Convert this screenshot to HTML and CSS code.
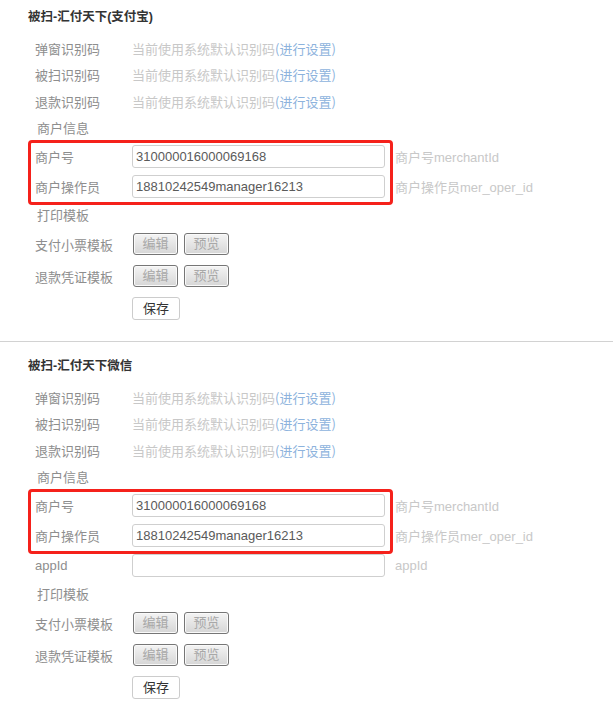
FILE: index.html
```html
<!DOCTYPE html>
<html lang="zh-CN">
<head>
<meta charset="utf-8">
<title>被扫-汇付天下</title>
<link rel="stylesheet" href="styles.css">
</head>
<body>
<div class="section">
  <div class="title">被扫-汇付天下(支付宝)</div>
  <div class="row r-code"><span class="label">弹窗识别码</span><span class="value">当前使用系统默认识别码<a class="link">(进行设置)</a></span></div>
  <div class="row r-code"><span class="label">被扫识别码</span><span class="value">当前使用系统默认识别码<a class="link">(进行设置)</a></span></div>
  <div class="row r-code"><span class="label">退款识别码</span><span class="value">当前使用系统默认识别码<a class="link">(进行设置)</a></span></div>
  <div class="row r-code"><span class="label sub">商户信息</span></div>
  <div class="merchant">
    <div class="row r-field"><span class="label">商户号</span><input class="field" type="text" value="310000016000069168"><span class="hint">商户号merchantId</span></div>
    <div class="row r-field"><span class="label">商户操作员</span><input class="field" type="text" value="18810242549manager16213"><span class="hint">商户操作员mer_oper_id</span></div>
  </div>
  <div class="row r-head"><span class="label sub">打印模板</span></div>
  <div class="row r-tpl"><span class="label">支付小票模板</span><button class="btn">编辑</button><button class="btn">预览</button></div>
  <div class="row r-tpl"><span class="label">退款凭证模板</span><button class="btn">编辑</button><button class="btn">预览</button></div>
  <div class="row r-tpl"><span class="label"></span><button class="btn-save">保存</button></div>
</div>
<div class="divider"></div>
<div class="section second">
  <div class="title">被扫-汇付天下微信</div>
  <div class="row r-code"><span class="label">弹窗识别码</span><span class="value">当前使用系统默认识别码<a class="link">(进行设置)</a></span></div>
  <div class="row r-code"><span class="label">被扫识别码</span><span class="value">当前使用系统默认识别码<a class="link">(进行设置)</a></span></div>
  <div class="row r-code"><span class="label">退款识别码</span><span class="value">当前使用系统默认识别码<a class="link">(进行设置)</a></span></div>
  <div class="row r-code"><span class="label sub">商户信息</span></div>
  <div class="merchant">
    <div class="row r-field"><span class="label">商户号</span><input class="field" type="text" value="310000016000069168"><span class="hint">商户号merchantId</span></div>
    <div class="row r-field"><span class="label">商户操作员</span><input class="field" type="text" value="18810242549manager16213"><span class="hint">商户操作员mer_oper_id</span></div>
  </div>
  <div class="row r-field"><span class="label">appId</span><input class="field" type="text" value=""><span class="hint">appId</span></div>
  <div class="row r-head"><span class="label sub">打印模板</span></div>
  <div class="row r-tpl"><span class="label">支付小票模板</span><button class="btn">编辑</button><button class="btn">预览</button></div>
  <div class="row r-tpl"><span class="label">退款凭证模板</span><button class="btn">编辑</button><button class="btn">预览</button></div>
  <div class="row r-tpl"><span class="label"></span><button class="btn-save">保存</button></div>
</div>
</body>
</html>
```

FILE: styles.css
```css
* { box-sizing: border-box; }
html, body {
  margin: 0;
  padding: 0;
  background: #fff;
}
body {
  font-family: "Liberation Sans", "Noto Sans CJK SC", sans-serif;
  font-size: 13px;
  color: #333;
  width: 613px;
  overflow: hidden;
}
.section {
  padding: 8px 0 17px 0;
}
.section.second {
  padding-top: 15px;
}
.title {
  padding-left: 28px;
  height: 18px;
  line-height: 18px;
  font-weight: bold;
  color: #333;
  font-size: 12.5px;
  margin-bottom: 9px;
}
.row {
  display: flex;
  align-items: center;
  padding-left: 35px;
}
.r-code { height: 26.5px; }
.r-field { height: 30px; }
.r-head { height: 27px; }
.r-tpl { height: 32px; }
.label {
  width: 97px;
  flex: none;
  color: #8e8e8e;
  white-space: nowrap;
}
.label.sub { padding-left: 2px; }
.value {
  color: #c8c8c8;
  white-space: nowrap;
  font-family: "Noto Sans CJK SC", sans-serif;
}
.link {
  color: #8db3dd;
  text-decoration: none;
}
.merchant {
  position: relative;
}
.merchant::after {
  content: "";
  position: absolute;
  top: -1px;
  left: 28px;
  width: 359px;
  height: 59px;
  border: 3px solid #f5211b;
  border-radius: 4px;
  pointer-events: none;
}
.field {
  width: 253px;
  height: 23px;
  border: 1px solid #cfcfcf;
  border-radius: 3px;
  padding: 0 0 0 3px;
  margin: 0;
  font-family: "Liberation Sans", "Noto Sans CJK SC", sans-serif;
  font-size: 13px;
  color: #5a5a5a;
  background: #fff;
  outline: none;
}
.hint {
  margin-left: 10px;
  color: #c8c8c8;
  white-space: nowrap;
}
.btn {
  width: 45px;
  height: 22px;
  margin: 0 6px 0 1px;
  padding: 0;
  border: 1px solid #767676;
  border-radius: 3px;
  background: linear-gradient(#f4f4f4, #d6d6d6);
  box-shadow: inset 0 0 0 1px #fafafa;
  color: #a8a8a8;
  font-family: "Liberation Sans", "Noto Sans CJK SC", sans-serif;
  font-size: 13px;
  line-height: 20px;
}
.btn + .btn { margin-left: 0; }
.btn-save {
  width: 48px;
  height: 23px;
  margin: 0;
  padding: 0;
  border: 1px solid #cccccc;
  border-radius: 3px;
  background: #fff;
  color: #333;
  font-family: "Liberation Sans", "Noto Sans CJK SC", sans-serif;
  font-size: 13px;
  line-height: 21px;
}
.divider {
  height: 1px;
  background: #d2d2d2;
}
```
